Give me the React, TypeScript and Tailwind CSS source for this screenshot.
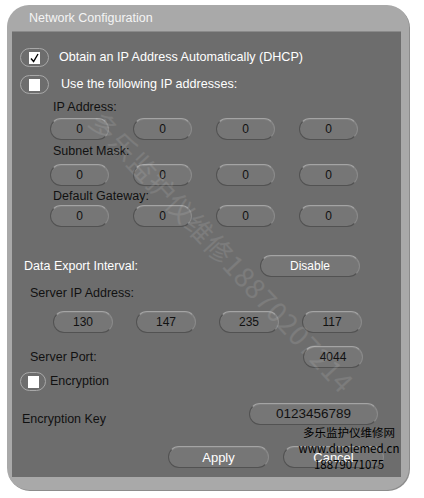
import React from 'react';

const font = { fontFamily: '"Liberation Sans", Arial, sans-serif' };

const Pill = ({ value, className = '', light = false }: { value: string; className?: string; light?: boolean }) => (
  <div
    className={`flex h-[22px] items-center justify-center rounded-full border border-[#525252] border-t-[#a4a4a4] border-r-[#8a8a8a] bg-[#767676] text-[12px] leading-none shadow-[inset_0_1px_0_rgba(255,255,255,0.08)] ${
      light ? 'text-white' : 'text-[#111]'
    } ${className}`}
  >
    {value}
  </div>
);

const Check = ({ checked, className = '' }: { checked: boolean; className?: string }) => (
  <div className={`flex h-[19px] items-center justify-center rounded-full border border-[#a8a8a8] ${className}`}>
    <div className="flex h-[12px] w-[11px] items-center justify-center bg-white">
      {checked && (
        <svg width="9" height="10" viewBox="0 0 9 10">
          <path d="M1 5.5 L3.6 8.5 L8 1" fill="none" stroke="#000" strokeWidth="1.4" />
        </svg>
      )}
    </div>
  </div>
);

const IpRow = ({ values, className = '' }: { values: string[]; className?: string }) => (
  <div className={`flex gap-[24px] ${className}`}>
    {values.map((v, i) => (
      <Pill key={i} value={v} className="w-[59px]" />
    ))}
  </div>
);

export default function App() {
  return (
    <div className="relative h-[498px] w-[424px] overflow-hidden bg-white pl-[7px] pt-[5px]" style={font}>
      {/* Dialog frame */}
      <div className="flex h-[485px] w-[402px] flex-col rounded-[22px] bg-[#a9a9a9] shadow-[1px_1px_0_#8c8c8c]">
        <div className="flex h-[26px] items-center pl-[22px] text-[12.5px] text-[#f4f4f4]">Network Configuration</div>

        <div className="ml-[5px] h-[446px] w-[389px] border-t border-[#8a8a8a] bg-[#6d6d6d]">
          {/* DHCP */}
          <div className="mt-[16px] flex items-center">
            <Check checked className="ml-[8px] w-[29px]" />
            <span className="ml-[10px] text-[12.6px] text-white">Obtain an IP Address Automatically (DHCP)</span>
          </div>
          <div className="mt-[8px] flex items-center">
            <Check checked={false} className="ml-[8px] w-[29px]" />
            <span className="ml-[12px] text-[12.6px] text-white">Use the following IP addresses:</span>
          </div>

          <div className="ml-[41px] mt-[6px] text-[12.5px] leading-[15px] text-[#111]">IP Address:</div>
          <IpRow values={['0', '0', '0', '0']} className="ml-[38px] mt-[3px]" />
          <div className="ml-[41px] mt-[4px] text-[12.5px] leading-[15px] text-[#111]">Subnet Mask:</div>
          <IpRow values={['0', '0', '0', '0']} className="ml-[38px] mt-[5px]" />
          <div className="ml-[41px] mt-[3px] text-[12.5px] leading-[15px] text-[#111]">Default Gateway:</div>
          <IpRow values={['0', '0', '0', '0']} className="ml-[38px] mt-[1px]" />

          {/* Export */}
          <div className="mt-[28px] flex items-center">
            <span className="ml-[12px] text-[12.5px] text-white">Data Export Interval:</span>
            <Pill value="Disable" light className="ml-auto mr-[41px] w-[100px]" />
          </div>

          <div className="ml-[18px] mt-[9px] text-[12.5px] leading-[15px] text-[#111]">Server IP Address:</div>
          <div className="ml-[41px] mt-[10px] flex gap-[23px]">
            {['130', '147', '235', '117'].map((v) => (
              <Pill key={v} value={v} className="h-[21px] w-[60px]" />
            ))}
          </div>

          <div className="mt-[13px] flex items-center">
            <span className="ml-[18px] text-[12.5px] text-[#111]">Server Port:</span>
            <Pill value="4044" className="ml-auto mr-[38px] h-[21px] w-[60px]" />
          </div>

          <div className="mt-[4px] flex items-center">
            <Check checked={false} className="ml-[8px] w-[26px]" />
            <span className="ml-[4px] text-[12.5px] text-[#111]">Encryption</span>
          </div>

          <div className="mt-[12px] flex h-[22px] items-start">
            <span className="ml-[10px] mt-[7px] text-[12.5px] leading-[18px] text-[#111]">Encryption Key</span>
            <Pill value="0123456789" className="ml-auto mr-[23px] w-[129px] text-[13.5px]" />
          </div>

          <div className="mt-[21px] flex gap-[14px] pl-[156px]">
            <Pill value="Apply" light className="w-[101px] text-[13px]" />
            <Pill value="Cancel" light className="w-[101px] text-[13px]" />
          </div>
        </div>
      </div>

      {/* Watermark */}
      <div
        className="pointer-events-none absolute left-[222px] top-[252px] -translate-x-1/2 -translate-y-1/2 rotate-[47deg] whitespace-nowrap text-[27px] tracking-[1px] text-white/10"
        style={{ fontFamily: '"Noto Sans CJK SC", "Liberation Sans", sans-serif' }}
      >
        多乐监护仪维修18870207214
      </div>

      {/* Shop stamp */}
      <div
        className="pointer-events-none absolute left-[292px] top-[424px] flex w-[114px] flex-col items-center text-[11.5px] leading-[16px] text-black"
        style={{ fontFamily: '"Noto Sans CJK SC", "DejaVu Sans", sans-serif' }}
      >
        <span>多乐监护仪维修网</span>
        <span>www.duolemed.cn</span>
        <span>18879071075</span>
      </div>
    </div>
  );
}
